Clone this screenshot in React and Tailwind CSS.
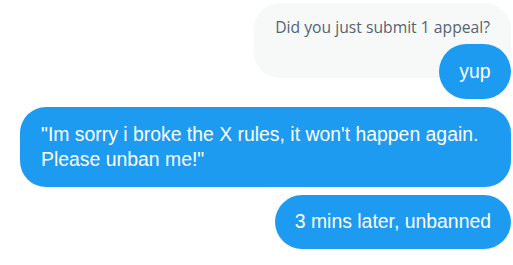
export default function App() {
  return (
    <div className="w-[513px] h-[265px] bg-white flex flex-col items-end pt-[3px] pr-[2px]">
      <div className="flex flex-col items-end">
        <div className="bg-[#f7f9f9] text-[#536471] rounded-[26px] px-[21px] pt-[14px] pb-[41px] text-[15.7px] leading-[20px] font-['Open_Sans',sans-serif]">
          Did you just submit 1 appeal?
        </div>
        <div className="-mt-[34px] bg-[#1d9bf0] text-white rounded-full h-[55px] w-[72px] flex items-center justify-center text-[19.4px] font-['Liberation_Sans',sans-serif]">
          yup
        </div>
      </div>
      <div className="mt-[8px] w-[491px] bg-[#1d9bf0] text-white rounded-[26px] pl-[21px] pr-[18px] py-[15px] text-[19.4px] leading-[25px] font-['Liberation_Sans',sans-serif]">
        "Im sorry i broke the X rules, it won't happen again. Please unban me!"
      </div>
      <div className="mt-[8px] bg-[#1d9bf0] text-white rounded-[27px] px-[20px] h-[54px] flex items-center text-[19.4px] font-['Liberation_Sans',sans-serif]">
        3 mins later, unbanned
      </div>
    </div>
  );
}
